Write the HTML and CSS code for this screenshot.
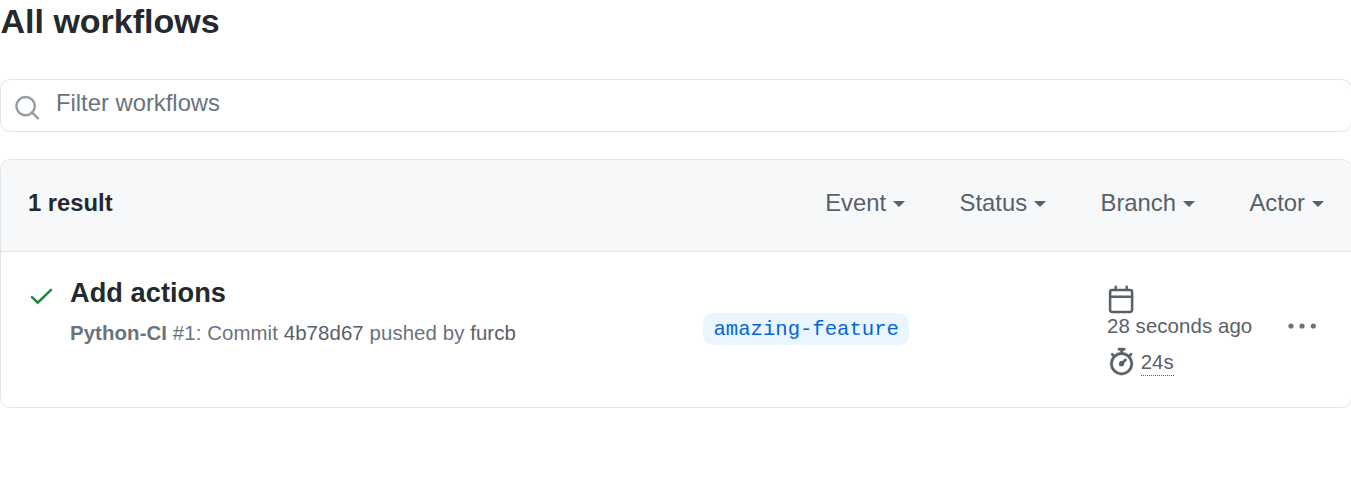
FILE: index.html
```html
<!DOCTYPE html>
<html lang="en">
<head>
<meta charset="utf-8">
<title>All workflows</title>
<link rel="stylesheet" href="styles.css">
</head>
<body>
<main class="page">
  <h1 class="title">All workflows</h1>
  <div class="filter">
    <svg class="filter-icon" width="28" height="28" viewBox="0 0 28 28"><circle cx="11.6" cy="12.1" r="9.2"/><path d="M18 18.4l6 6"/></svg>
    <span class="filter-text">Filter workflows</span>
  </div>
  <section class="box">
    <header class="box-header">
      <strong class="count">1 result</strong>
      <nav class="menus">
        <span class="menu">Event<i class="caret"></i></span>
        <span class="menu">Status<i class="caret"></i></span>
        <span class="menu">Branch<i class="caret"></i></span>
        <span class="menu">Actor<i class="caret"></i></span>
      </nav>
    </header>
    <div class="run">
      <svg class="check" width="27" height="27" viewBox="0 0 27 27"><path d="M4 15.1l5.7 5.6L23 7.8"/></svg>
      <div class="info">
        <h2 class="run-title">Add actions</h2>
        <p class="run-meta"><b>Python-CI</b> #1: Commit <span class="link">4b78d67</span> pushed by <span class="link">furcb</span></p>
      </div>
      <div class="branch-cell"><span class="branch">amazing-feature</span></div>
      <div class="times">
        <svg class="calendar" width="28" height="28" viewBox="0 0 28 28"><rect x="3.1" y="5.1" width="22" height="21.8" rx="1.8"/><path d="M3.1 11.8h22M8.7 1.8v3M19.7 1.8v3"/></svg>
        <span class="ago">28 seconds ago</span>
        <div class="duration">
          <svg width="27.2" height="27.2" viewBox="0 0 16 16"><path stroke="currentColor" stroke-width=".2" d="M5.75.75A.75.75 0 0 1 6.5 0h3a.75.75 0 0 1 0 1.5h-.75v1l-.001.041a6.724 6.724 0 0 1 3.464 1.435l.007-.006.75-.75a.749.749 0 0 1 1.275.326.749.749 0 0 1-.215.734l-.75.75-.006.007a6.75 6.75 0 1 1-10.548 0L2.72 5.03l-.75-.75a.751.751 0 0 1 .018-1.042.751.751 0 0 1 1.042-.018l.75.75.007.006A6.72 6.72 0 0 1 7.25 2.541V1.5H6.5a.75.75 0 0 1-.75-.75ZM8 14.5a5.25 5.25 0 1 0-.001-10.501A5.25 5.25 0 0 0 8 14.5Zm.389-6.7 1.33-1.33a.75.75 0 1 1 1.061 1.06L9.45 8.861A1.503 1.503 0 0 1 8 10.75a1.499 1.499 0 1 1 .389-2.95Z"/></svg>
          <span class="elapsed">24s</span>
        </div>
      </div>
      <svg class="kebab" width="28" height="8" viewBox="0 0 28 8"><circle cx="3" cy="4" r="2.6"/><circle cx="14" cy="4" r="2.6"/><circle cx="25.3" cy="4" r="2.6"/></svg>
    </div>
  </section>
</main>
</body>
</html>
```
FILE: styles.css
```css
* { box-sizing: border-box; }
html { overflow: hidden; }
body { margin: 0; background: #fff; color: #24292e; font-family: "Liberation Sans", Arial, sans-serif; overflow: hidden; }
.page { width: 1352px; }
.title { margin: 0; height: 79px; padding-left: .5px; font-size: 34px; line-height: 42px; font-weight: 700; }
.filter { display: flex; height: 53px; padding: 14px 13px; border: 1px solid #e1e4e8; border-radius: 10px; }
.filter-icon { fill: none; stroke: #959da5; stroke-width: 2.5; stroke-linecap: round; flex: none; }
.filter-text { margin: -5px 0 0 14px; font-size: 23.8px; line-height: 28px; color: #6a737d; }
.box { margin-top: 27px; height: 249px; border: 1px solid #e1e4e8; border-radius: 10px; overflow: hidden; }
.box-header { display: flex; justify-content: space-between; height: 92px; padding: 29px 27px 0; background: #f6f8fa; border-bottom: 1px solid #e1e4e8; font-size: 23.8px; line-height: 28px; }
.menus { display: flex; gap: 54.5px; color: #586069; }
.menu { display: flex; }
.caret { margin: 12px 0 0 7px; width: 0; height: 0; border: 6px solid transparent; border-top-color: #586069; border-bottom: 0; }
.run { display: flex; align-items: flex-start; padding-left: 28px; }
.check { flex: none; margin-top: 30px; margin-right: 1px; margin-left: -1px; fill: none; stroke: #22863a; stroke-width: 2.5; stroke-linecap: round; }
.info { width: 634px; padding: 24px 0 0 14px; }
.run-title { margin: 0; font-size: 27.2px; line-height: 34px; font-weight: 700; letter-spacing: .04px; }
.run-meta { margin: 8px 0 0; font-size: 20.4px; line-height: 30px; letter-spacing: .09px; color: #6a737d; }
.link { color: #586069; }
.branch-cell { width: 404px; padding-top: 61px; margin-left: 13px; }
.branch { display: block; width: 206px; height: 32px; padding: 1px 0 0 10.5px; border-radius: 10px; background: #eaf5ff; color: #0366d6; font: 20.6px/32px "Liberation Mono", monospace; }
.times { width: 181px; padding-top: 33px; color: #586069; font-size: 20.4px; }
.times svg { display: block; margin-left: .6px; fill: currentColor; flex: none; overflow: visible; }
.times .calendar { margin-left: 0; fill: none; stroke: currentColor; stroke-width: 2.5; stroke-linecap: round; stroke-linejoin: round; }
.ago { display: block; line-height: 28px; margin-top: -1px; letter-spacing: .09px; white-space: nowrap; }
.duration { display: flex; margin-top: 8px; }
.elapsed { margin: 0 0 0 6px; height: 28px; line-height: 28px; border-bottom: 1px dotted #586069; }
.kebab { flex: none; margin-top: 70px; fill: #6a737d; }
```
